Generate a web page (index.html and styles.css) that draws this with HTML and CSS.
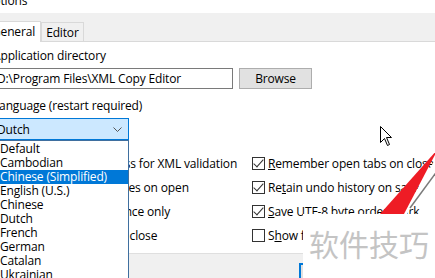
FILE: index.html
```html
<!DOCTYPE html>
<html lang="en">
<head>
  <meta charset="UTF-8">
  <title>Options</title>
  <link rel="stylesheet" href="styles.css">
</head>
<body>

  <div class="dialog">
    <div class="titlebar">
      <span class="title">Options</span>
    </div>

    <div class="tabstrip">
      <div class="tab active">General</div>
      <div class="tab">Editor</div>
    </div>

    <div class="page">
      <div class="field-label">Application directory</div>
      <div class="dir-row">
        <input class="dir" type="text" value="D:\Program Files\XML Copy Editor">
        <button class="btn">Browse</button>
      </div>

      <div class="field-label lang-label">Language (restart required)</div>
      <div class="combo">
        <span>Dutch</span>
        <svg class="chevron" width="9" height="5" viewBox="0 0 9 5"><polyline points="0.5,0.5 4.5,4.5 8.5,0.5" fill="none" stroke="#555" stroke-width="1"/></svg>

        <ul class="combo-list">
          <li>Default</li>
          <li>Cambodian</li>
          <li class="selected">Chinese (Simplified)</li>
          <li>English (U.S.)</li>
          <li>Chinese</li>
          <li>Dutch</li>
          <li>French</li>
          <li>German</li>
          <li>Catalan</li>
          <li>Ukrainian</li>
        </ul>
      </div>

      <div class="options">
        <div class="col">
          <label class="check"><span class="box on"></span>Use external process for XML validation</label>
          <label class="check"><span class="box on"></span>Parse internal entities on open</label>
          <label class="check"><span class="box"></span>Allow a single instance only</label>
          <label class="check"><span class="box on"></span>Prompt for save on close</label>
        </div>
        <div class="col">
          <label class="check"><span class="box on"></span><u>R</u>emember open tabs on close</label>
          <label class="check"><span class="box on"></span>Re<u>t</u>ain undo history on save</label>
          <label class="check"><span class="box on"></span><u>S</u>ave UTF-8 byte order mark</label>
          <label class="check"><span class="box"></span>S<u>h</u>ow full path in document tab</label>
        </div>
      </div>
    </div>

    <div class="buttons">
      <button class="btn default">OK</button>
      <button class="btn">Cancel</button>
    </div>

    <!-- things lying over the dialog in the screenshot -->
    <svg class="cursor" width="13" height="21" viewBox="0 0 13 21">
      <path d="M0.5,0.5 L0.5,16.5 L4.5,12.5 L7.5,19.5 L9.5,18.5 L6.5,11.5 L11.5,11.5 Z" fill="#fff" stroke="#000" stroke-width="1"/>
    </svg>

    <svg class="arrow" width="70" height="74" viewBox="0 0 70 74">
      <polygon points="66,10 66,16 32,74 27,74" fill="#fff"/>
      <line x1="63" y1="30" x2="35" y2="68" stroke="#7a7a7a" stroke-width="1.5"/>
      <polygon points="63,9 29,74 5,74" fill="#ee1c25"/>
    </svg>

    <div class="watermark">软件技巧</div>
  </div>

</body>
</html>
```

FILE: styles.css
```css
html, body {
  margin: 0;
  height: 100%;
  overflow: hidden;
}
body {
  font-family: "Open Sans", "Noto Sans", sans-serif;
  font-size: 12px;
  letter-spacing: -0.15px;
  color: #000;
  background-color: #fff;
}
.dialog {
  position: relative;
  width: 460px;
  height: 278px;
  margin-left: -8px;
  background-color: #f0f0f0;
}
.titlebar {
  height: 13px;
  background-color: #fff;
  overflow: hidden;
}
.title {
  display: block;
  margin: -7px 0 0 -8px;
  line-height: 16px;
}
.tabstrip {
  display: flex;
  align-items: flex-end;
  height: 28px;
  margin-left: -6px;
  border-bottom: 1px solid #d9d9d9;
}
.tab {
  height: 18px;
  padding: 0 4px;
  line-height: 19px;
  border: 1px solid #d9d9d9;
  border-bottom: none;
  background-color: #f0f0f0;
}
.tab.active {
  height: 20px;
  padding: 0 5px;
  line-height: 20px;
  margin-bottom: -1px;
  background-color: #fff;
}
.page {
  height: 211px;
  background-color: #fff;
  padding-top: 6px;
  box-sizing: border-box;
}
.field-label {
  margin-left: 1px;
  line-height: 16px;
}
.lang-label {
  margin-top: 9px;
}
.dir-row {
  display: flex;
  gap: 6px;
  margin-top: 4px;
}
.dir {
  width: 241px;
  height: 21px;
  box-sizing: border-box;
  margin: 0;
  padding: 0 4px;
  border: 1px solid #7a7a7a;
  font: inherit;
  letter-spacing: inherit;
}
.btn {
  width: 73px;
  height: 21px;
  margin: 0;
  padding: 0;
  border: 1px solid #adadad;
  background-color: #e1e1e1;
  font: inherit;
  letter-spacing: inherit;
  color: #000;
}
.combo {
  position: relative;
  display: flex;
  align-items: center;
  justify-content: space-between;
  width: 137px;
  height: 22px;
  box-sizing: border-box;
  margin-top: 4px;
  padding: 0 6px 0 4px;
  background-color: #cce8ff;
  border: 1px solid #0078d7;
}
.combo-list {
  position: absolute;
  top: 21px;
  left: -1px;
  z-index: 2;
  width: 137px;
  height: 160px;
  box-sizing: border-box;
  margin: 0;
  padding: 1px 0 0;
  list-style: none;
  background-color: #fff;
  border: 1px solid #3f6f9f;
}
.combo-list li {
  height: 14px;
  line-height: 14px;
  padding-left: 7px;
}
.combo-list li.selected {
  background-color: #0078d7;
  color: #fff;
}
.options {
  display: grid;
  grid-template-columns: 246px auto;
  padding-left: 14px;
  margin-top: 11px;
}
.check {
  display: flex;
  align-items: center;
  height: 24px;
  white-space: nowrap;
}
.box {
  position: relative;
  width: 13px;
  height: 13px;
  box-sizing: border-box;
  margin-right: 3px;
  border: 1px solid #333;
  background-color: #fff;
  flex: none;
}
.box.on::after {
  content: "";
  position: absolute;
  left: 3px;
  top: -1px;
  width: 4px;
  height: 9px;
  border: solid #333;
  border-width: 0 1px 1px 0;
  transform: rotate(42deg);
}
.buttons {
  display: flex;
  gap: 8px;
  height: 25px;
  padding: 9px 0 0 307px;
  border-top: 1px solid #dfdfdf;
}
.btn.default {
  width: 75px;
  height: 23px;
  border: 2px solid #0078d7;
}
.cursor {
  position: absolute;
  left: 388px;
  top: 126px;
}
.arrow {
  position: absolute;
  left: 383px;
  top: 140px;
}
.watermark {
  position: absolute;
  left: 311px;
  top: 214px;
  width: 140px;
  height: 64px;
  padding: 12px 0 0 6px;
  box-sizing: border-box;
  background-color: #fff;
  color: #c4c4c4;
  font-family: "Noto Sans CJK SC", sans-serif;
  font-size: 30px;
  line-height: 34px;
  letter-spacing: 0;
}
```
